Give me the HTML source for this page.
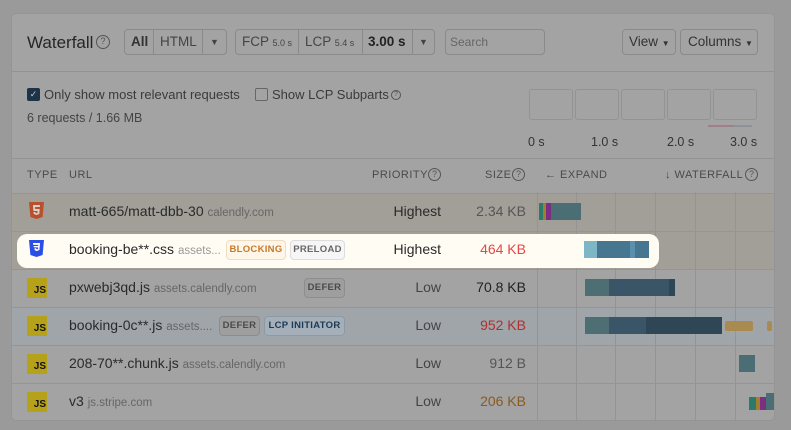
<!DOCTYPE html><html><head><style>
*{margin:0;padding:0;box-sizing:border-box}
body{width:791px;height:430px;background:#9a9a9a;font-family:"Liberation Sans",sans-serif;position:relative;overflow:hidden;color:#222}
.a{position:absolute;white-space:nowrap}
.card{position:absolute;left:11px;top:13px;width:764px;height:408px;background:#a3a3a3;border:1px solid #959595;border-radius:5px}
.btn{position:absolute;top:29px;height:26px;border:1px solid #8a8a8a;border-radius:4px;font-size:13.5px;line-height:24px;color:#333}
.q{position:absolute;width:13px;height:13px;border:1.3px solid #555;border-radius:50%;font-size:9px;line-height:11px;text-align:center;color:#555}
.row{position:absolute;left:12px;width:762px;height:38px;border-top:1px solid #959595}
.url{font-size:14px;color:#2a2a2a}
.dom{font-size:11.5px;color:#666}
.tag{position:absolute;height:20px;border:1px solid #8d8d8d;border-radius:4px;font-size:9.5px;font-weight:bold;line-height:18px;text-align:center;color:#4a4a4a;background:#9e9e9e;letter-spacing:.3px}
.js{position:absolute;left:27px;width:20px;height:20px;background:#b6a21a;font-size:10px;font-weight:bold;color:#111;text-align:right;padding:7px 1px 0 0;line-height:12px}
.pr{font-size:14px;color:#2a2a2a;right:350px;text-align:right}
.sz{font-size:14px;right:265px;text-align:right}
.b{position:absolute;height:17px}
.g{position:absolute;top:158px;width:1px;height:262px;background:#949494}
.h{position:absolute;top:169px;font-size:11px;color:#4a4a4a;letter-spacing:.5px;white-space:nowrap}
.sep{position:absolute;top:0;width:1px;height:24px;background:#8a8a8a}
</style></head><body>
<div class="card"></div>
<div class="a" style="left:27px;top:33px;font-size:17px;color:#262626">Waterfall</div>
<div class="q" style="left:96px;top:35px;width:14px;height:14px">?</div>
<div class="btn" style="left:124px;width:103px"><span class="a" style="left:6px;font-weight:bold">All</span><span class="sep" style="left:28px"></span><span class="a" style="left:35px;color:#444">HTML</span><span class="sep" style="left:77px"></span><span class="a" style="left:85px;font-size:9px;color:#444">▼</span></div>
<div class="btn" style="left:235px;width:200px;color:#444"><span class="a" style="left:6px">FCP <small style="font-size:9px">5.0 s</small></span><span class="sep" style="left:62px"></span><span class="a" style="left:69px">LCP <small style="font-size:9px">5.4 s</small></span><span class="sep" style="left:126px"></span><span class="a" style="left:132px;font-weight:bold;color:#222">3.00 s</span><span class="sep" style="left:176px"></span><span class="a" style="left:183px;font-size:9px">▼</span></div>
<div class="btn" style="left:445px;width:100px;color:#666;font-size:12px"><span class="a" style="left:4px">Search</span></div>
<div class="btn" style="left:622px;width:54px"><span class="a" style="left:6px">View <small style="font-size:8px">▼</small></span></div>
<div class="btn" style="left:680px;width:78px"><span class="a" style="left:7px">Columns <small style="font-size:8px">▼</small></span></div>
<div class="a" style="left:12px;top:71px;width:762px;height:1px;background:#939393"></div>
<div class="a" style="left:27px;top:88px;width:13px;height:13px;background:#1d3346;border-radius:2px;color:#ccc;font-size:9px;line-height:13px;text-align:center">✓</div>
<div class="a" style="left:44px;top:87px;font-size:13px;color:#3a3a3a">Only show most relevant requests</div>
<div class="a" style="left:255px;top:88px;width:13px;height:13px;border:1.2px solid #666;border-radius:2px"></div>
<div class="a" style="left:272px;top:87px;font-size:13px;color:#3a3a3a">Show LCP Subparts</div>
<div class="q" style="left:391px;top:90px;width:10px;height:10px;font-size:7px;line-height:8px;border-width:1px">?</div>
<div class="a" style="left:27px;top:111px;font-size:12.5px;color:#444">6 requests / 1.66 MB</div>
<div class="a" style="left:529px;top:89px;width:44px;height:31px;border:1px solid #939393;border-radius:3px"></div>
<div class="a" style="left:575px;top:89px;width:44px;height:31px;border:1px solid #939393;border-radius:3px"></div>
<div class="a" style="left:621px;top:89px;width:44px;height:31px;border:1px solid #939393;border-radius:3px"></div>
<div class="a" style="left:667px;top:89px;width:44px;height:31px;border:1px solid #939393;border-radius:3px"></div>
<div class="a" style="left:713px;top:89px;width:44px;height:31px;border:1px solid #939393;border-radius:3px"></div>
<div class="a" style="left:708px;top:125px;width:26px;height:2px;background:#a08088"></div>
<div class="a" style="left:734px;top:125px;width:18px;height:2px;background:#8c9298"></div>
<div class="a" style="left:528px;top:135px;font-size:12.5px;color:#333">0 s</div>
<div class="a" style="left:591px;top:135px;font-size:12.5px;color:#333">1.0 s</div>
<div class="a" style="left:667px;top:135px;font-size:12.5px;color:#333">2.0 s</div>
<div class="a" style="left:730px;top:135px;font-size:12.5px;color:#333">3.0 s</div>
<div class="a" style="left:12px;top:158px;width:762px;height:1px;background:#939393"></div>
<div class="row" style="top:193px;background:#a19f98"></div>
<div class="row" style="top:231px;background:#a19f98"></div>
<div class="row" style="top:269px"></div>
<div class="row" style="top:307px;background:#a0a5a9"></div>
<div class="row" style="top:345px"></div>
<div class="row" style="top:383px;height:37px"></div>
<div class="g" style="left:537px"></div><div class="g" style="left:576px"></div><div class="g" style="left:615px"></div><div class="g" style="left:655px"></div><div class="g" style="left:695px"></div><div class="g" style="left:735px"></div>
<div class="a" style="left:12px;top:159px;width:762px;height:33px;background:#a3a3a3"></div>
<div class="h" style="left:27px">TYPE</div>
<div class="h" style="left:69px">URL</div>
<div class="h" style="left:372px">PRIORITY</div><div class="q" style="left:428px;top:168px">?</div>
<div class="h" style="left:485px">SIZE</div><div class="q" style="left:512px;top:168px">?</div>
<div class="h" style="left:545px">← EXPAND</div>
<div class="h" style="left:665px">↓ WATERFALL</div><div class="q" style="left:745px;top:168px">?</div>
<div class="a" style="left:17px;top:234px;width:642px;height:34px;background:#fffcf4;border-radius:10px"></div>
<svg class="a" style="left:29px;top:202px" width="15" height="17" viewBox="0 0 15 17"><path d="M0 0h15l-1.4 15L7.5 17 1.4 15z" fill="#b8502e"/><path d="M4 3h7l-.2 2H6l.2 2h4.5l-.4 5-2.8 1-2.8-1-.2-2h2l.1 1 .9.3.9-.3.2-2H4.4z" fill="#d8d0c8"/></svg>
<div class="a url" style="left:69px;top:203px">matt-665/matt-dbb-30 <span class="dom">calendly.com</span></div>
<div class="a pr" style="top:203px">Highest</div>
<div class="a sz" style="top:203px;color:#555">2.34 KB</div>
<div class="b" style="left:539px;top:203px;width:4px;background:#2b7a6a"></div><div class="b" style="left:543px;top:203px;width:3px;background:#a08030"></div><div class="b" style="left:546px;top:203px;width:5px;background:#7a2f80"></div><div class="b" style="left:551px;top:203px;width:30px;background:#4b6d74"></div>
<svg class="a" style="left:29px;top:240px" width="15" height="17" viewBox="0 0 15 17"><path d="M0 0h15l-1.4 15L7.5 17 1.4 15z" fill="#2a4fe6"/><path d="M4 3h7l-.6 7-2.9 1.1L5.6 10l-.1-1.7h1.6l.1.7.9.3 1-.3.1-1.6H4.8L4.6 6h4.6l.1-1.1H4.2z" fill="#fff"/></svg>
<div class="a url" style="left:69px;top:241px">booking-be**.css <span class="dom" style="color:#999">assets...</span></div>
<div class="tag" style="left:226px;top:240px;width:60px;color:#c57a2a;border-color:#f1dcc2;background:#fff6ea">BLOCKING</div>
<div class="tag" style="left:290px;top:240px;width:55px;color:#666;border-color:#ddd;background:#f6f6f6">PRELOAD</div>
<div class="a pr" style="top:241px">Highest</div>
<div class="a sz" style="top:241px;color:#e54848">464 KB</div>
<div class="b" style="left:584px;top:241px;width:13px;background:#7db7c6"></div><div class="b" style="left:597px;top:241px;width:33px;background:#477690"></div><div class="b" style="left:630px;top:241px;width:5px;background:#5a8fae"></div><div class="b" style="left:635px;top:241px;width:14px;background:#477690"></div>
<div class="js" style="top:278px">JS</div>
<div class="a url" style="left:69px;top:279px">pxwebj3qd.js <span class="dom">assets.calendly.com</span></div>
<div class="tag" style="left:304px;top:278px;width:41px">DEFER</div>
<div class="a pr" style="top:279px;color:#444">Low</div>
<div class="a sz" style="top:279px;color:#222">70.8 KB</div>
<div class="b" style="left:585px;top:279px;width:24px;background:#4d6e72"></div><div class="b" style="left:609px;top:279px;width:60px;background:#3a5568"></div><div class="b" style="left:669px;top:279px;width:6px;background:#2f4656"></div>
<div class="js" style="top:316px">JS</div>
<div class="a url" style="left:69px;top:317px">booking-0c**.js <span class="dom">assets....</span></div>
<div class="tag" style="left:219px;top:316px;width:41px">DEFER</div>
<div class="tag" style="left:264px;top:316px;width:81px;color:#1d3a55;background:#a4afb9;border-color:#8d9aa6">LCP INITIATOR</div>
<div class="a pr" style="top:317px;color:#444">Low</div>
<div class="a sz" style="top:317px;color:#b03030">952 KB</div>
<div class="b" style="left:585px;top:317px;width:24px;background:#4d6e72"></div><div class="b" style="left:609px;top:317px;width:37px;background:#3a5568"></div><div class="b" style="left:646px;top:317px;width:76px;background:#2f4656"></div><div class="b" style="left:725px;top:321px;width:28px;height:10px;background:#a98b52;border-radius:2px"></div><div class="b" style="left:767px;top:321px;width:5px;height:10px;background:#a98b52;border-radius:2px"></div>
<div class="js" style="top:354px">JS</div>
<div class="a url" style="left:69px;top:355px">208-70**.chunk.js <span class="dom">assets.calendly.com</span></div>
<div class="a pr" style="top:355px;color:#444">Low</div>
<div class="a sz" style="top:355px;color:#555">912 B</div>
<div class="b" style="left:739px;top:355px;width:16px;background:#4b6d74"></div>
<div class="js" style="top:392px">JS</div>
<div class="a url" style="left:69px;top:393px">v3 <span class="dom">js.stripe.com</span></div>
<div class="a pr" style="top:393px;color:#444">Low</div>
<div class="a sz" style="top:393px;color:#8a5a20">206 KB</div>
<div class="b" style="left:749px;top:397px;width:7px;height:13px;background:#2b7a6a"></div><div class="b" style="left:756px;top:397px;width:4px;height:13px;background:#a08030"></div><div class="b" style="left:760px;top:397px;width:6px;height:13px;background:#7a2f80"></div><div class="b" style="left:766px;top:393px;width:8px;height:17px;background:#4b6d74"></div>
</body></html>
